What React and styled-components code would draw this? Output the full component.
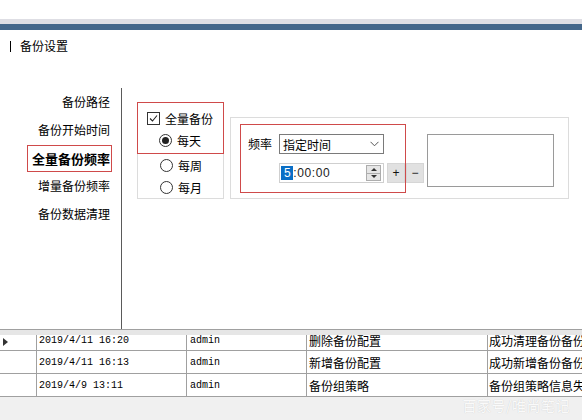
import React from 'react';
import styled, { createGlobalStyle } from 'styled-components';

const Global = createGlobalStyle`
  html, body { margin: 0; padding: 0; background: #fff; }
  body {
    width: 582px; height: 420px; overflow: hidden;
    font-family: "Noto Sans CJK SC", "Microsoft YaHei", sans-serif;
    color: #000;
  }
`;

const CJK = `"Noto Sans CJK SC", "Microsoft YaHei", sans-serif`;
const RED = '#cf4a4a';

const Page = styled.div`
  width: 582px; height: 420px; display: flex; flex-direction: column;
  overflow: hidden; background: #fff;
`;
const TopWhite = styled.div`height: 19px; flex-shrink: 0;`;
const GrayBand = styled.div`height: 5px; background: #dedee4; flex-shrink: 0;`;
const BlueBand = styled.div`height: 6px; background: #44678a; flex-shrink: 0;`;

const TitleBar = styled.div`
  height: 58px; box-sizing: border-box; padding: 8px 0 0 10px;
  display: flex; align-items: flex-start; flex-shrink: 0;
`;
const TitleText = styled.div`
  display: flex; align-items: center; height: 16px;
  font-size: 12px; font-family: ${CJK}; line-height: 16px;
`;
const TitleMark = styled.span`
  display: inline-block; width: 1px; height: 11px; background: #000; margin-right: 9px;
`;

const Main = styled.div`
  height: 241px; display: flex; flex-shrink: 0;
`;
const Sidebar = styled.div`
  width: 121px; box-sizing: border-box; padding-right: 11px;
  display: flex; flex-direction: column; align-items: flex-end;
`;
const MenuItem = styled.div`
  font-family: ${CJK};
  white-space: nowrap;
  ${p => p.$active ? `
    font-size: 13px; font-weight: 700;
    height: 27px; line-height: 25px; box-sizing: border-box;
    border: 1px solid ${RED}; margin: 1px -2px 0 0; padding: 0 1px 0 4px;
  ` : `
    font-size: 12px; height: 28px; line-height: 28px;
  `}
`;
const Divider = styled.div`width: 1px; background: #5a5a5a;`;

const Content = styled.div`
  flex: 1; padding: 14px 0 0 15px; box-sizing: border-box;
`;
const GroupRow = styled.div`
  display: flex; align-items: flex-end; gap: 6px;
`;
const Group1 = styled.div`
  width: 87px; height: 97px; box-sizing: border-box;
  border: 1px solid #dcdcdc; border-top: none;
  display: flex; flex-direction: column;
`;
const RedBox1 = styled.div`
  margin: 0 -1px; height: 52px; box-sizing: border-box;
  border: 1px solid ${RED}; padding-top: 4px;
`;
const OptRow = styled.div`
  height: 22px; display: flex; align-items: center;
  padding-left: ${p => p.$indent}px; gap: 5px;
  font-size: 12px; font-family: ${CJK};
`;
const CheckBox = styled.span`
  width: 11px; height: 11px; border: 1px solid #333; background: #fff;
  display: inline-flex; align-items: center; justify-content: center;
`;
const Radio = styled.span`
  width: 11px; height: 11px; border: 1px solid #333; border-radius: 50%;
  display: inline-flex; align-items: center; justify-content: center; background: #fff;
  &::after {
    content: ''; width: 7px; height: 7px; border-radius: 50%;
    background: ${p => p.$checked ? '#222' : 'transparent'};
  }
`;

const Group2 = styled.div`
  width: 339px; height: 82px; box-sizing: border-box;
  border: 1px solid #dcdcdc; display: flex; align-items: flex-start;
`;
const RedBox2 = styled.div`
  margin: 6px 0 0 9px; width: 166px; height: 69px; box-sizing: border-box;
  border: 1px solid ${RED}; padding: 9px 0 0 7px;
  display: grid; grid-template-columns: 31px auto; grid-auto-rows: 20px;
  row-gap: 9px; align-items: center; align-content: start;
`;
const Label = styled.span`font-size: 12px; font-family: ${CJK}; line-height: 20px;`;
const Select = styled.div`
  width: 105px; height: 20px; box-sizing: border-box; border: 1px solid #7a7a7a;
  background: #fff; display: flex; align-items: center; justify-content: space-between;
  padding: 0 4px 0 3px; font-size: 12px; font-family: ${CJK};
`;
const TimeRow = styled.div`display: flex; gap: 3px; align-items: center;`;
const TimeInput = styled.div`
  width: 105px; height: 20px; box-sizing: border-box; border: 1px solid #cfcfcf;
  display: flex; align-items: center; justify-content: space-between; padding: 0 2px 0 1px;
  font-family: "Liberation Sans", Arial, sans-serif; font-size: 12px; color: #222;
`;
const TimeText = styled.span`letter-spacing: 0.6px;`;
const Sel = styled.span`background: #0a6fc6; color: #fff; padding: 0 2px 0 3px; line-height: 13px;`;
const Spin = styled.div`
  width: 15px; height: 16px; display: flex; flex-direction: column;
  border: 1px solid #adadad; box-sizing: border-box; background: #e6e6e6;
`;
const SpinHalf = styled.div`
  flex: 1; display: flex; align-items: center; justify-content: center;
  ${p => p.$top ? 'border-bottom: 1px solid #adadad;' : ''}
`;
const Tri = styled.span`
  width: 0; height: 0; border-left: 3px solid transparent; border-right: 3px solid transparent;
  ${p => p.$up ? 'border-bottom: 3px solid #333;' : 'border-top: 3px solid #333;'}
`;
const SmallBtn = styled.div`
  width: 18px; height: 20px; box-sizing: border-box; background: #e1e1e1;
  border: 1px solid #d6d6d6; display: flex; align-items: center; justify-content: center;
  font-family: "Liberation Sans", Arial, sans-serif; font-size: 12px; color: #111;
  ${p => p.$offset ? `margin-top: ${p.$offset}px;` : ''}
`;
const TextBox = styled.div`
  margin: 16px 0 0 3px; width: 127px; height: 53px; box-sizing: border-box;
  border: 1px solid #9a9a9a; background: #fff;
`;

const Table = styled.div`
  border-top: 1px solid #a0a0a0; flex-shrink: 0;
`;
const Band = styled.div`height: 5px; background: #e6e6e6;`;
const Row = styled.div`
  display: grid; grid-template-columns: 37px 150px 120px 181px 1fr;
  box-sizing: border-box;
  height: ${p => p.$clip ? 16 : 23}px; border-bottom: 1px solid #a0a0a0; background: #fff;
`;
const Cell = styled.div`
  box-sizing: border-box; border-right: 1px solid #a0a0a0; overflow: hidden; white-space: nowrap;
  padding-left: ${p => p.$pad ?? 2}px;
  display: flex; align-items: ${p => p.$clip ? 'flex-start' : 'center'};
  font-family: ${p => p.$mono ? '"Liberation Mono", "Courier New", monospace' : CJK};
  font-size: ${p => p.$mono ? 10 : 12}px;
  line-height: ${p => p.$clip ? '9px' : 'normal'};
  ${p => p.$clip ? 'padding-top: 1px;' : ''}
  &:last-child { border-right: none; }
`;
const RowMark = styled.span`
  margin: 2px 0 0 1px;
  width: 0; height: 0; border-top: 4px solid transparent; border-bottom: 4px solid transparent;
  border-left: 5px solid #333;
`;
const Bottom = styled.div`
  flex: 1; background: #f0f0f0; display: flex; justify-content: flex-end; align-items: flex-start;
  padding: 0 12px 0 0;
`;
const Watermark = styled.span`
  font-family: ${CJK}; font-size: 14px; color: rgba(255,255,255,0.92);
  text-shadow: 0 0 1px rgba(0,0,0,0.18); letter-spacing: 0.5px; line-height: 16px;
`;

const rows = [
  { t: '2019/4/11 16:20', u: 'admin', a: '删除备份配置', r: '成功清理备份备份', clip: true },
  { t: '2019/4/11 16:13', u: 'admin', a: '新增备份配置', r: '成功新增备份备份' },
  { t: '2019/4/9 13:11', u: 'admin', a: '备份组策略', r: '备份组策略信息失败' },
];

export default function App() {
  return (
    <Page>
      <Global />
      <TopWhite />
      <GrayBand />
      <BlueBand />
      <TitleBar>
        <TitleText><TitleMark />备份设置</TitleText>
      </TitleBar>
      <Main>
        <Sidebar>
          <MenuItem>备份路径</MenuItem>
          <MenuItem>备份开始时间</MenuItem>
          <MenuItem $active>全量备份频率</MenuItem>
          <MenuItem>增量备份频率</MenuItem>
          <MenuItem>备份数据清理</MenuItem>
        </Sidebar>
        <Divider />
        <Content>
          <GroupRow>
            <Group1>
              <RedBox1>
                <OptRow $indent={9}>
                  <CheckBox>
                    <svg width="9" height="9" viewBox="0 0 9 9">
                      <polyline points="1,4.5 3.5,7 8,1.5" fill="none" stroke="#222" strokeWidth="1.1" />
                    </svg>
                  </CheckBox>
                  全量备份
                </OptRow>
                <OptRow $indent={21}><Radio $checked />每天</OptRow>
              </RedBox1>
              <OptRow $indent={22}><Radio />每周</OptRow>
              <OptRow $indent={22}><Radio />每月</OptRow>
            </Group1>
            <Group2>
              <RedBox2>
                <Label>频率</Label>
                <Select>
                  <span>指定时间</span>
                  <svg width="9" height="6" viewBox="0 0 9 6">
                    <polyline points="0.5,0.8 4.5,4.8 8.5,0.8" fill="none" stroke="#555" strokeWidth="1" />
                  </svg>
                </Select>
                <span />
                <TimeRow>
                  <TimeInput>
                    <TimeText><Sel>5</Sel>:00:00</TimeText>
                    <Spin>
                      <SpinHalf $top><Tri $up /></SpinHalf>
                      <SpinHalf><Tri /></SpinHalf>
                    </Spin>
                  </TimeInput>
                  <SmallBtn>+</SmallBtn>
                </TimeRow>
              </RedBox2>
              <SmallBtn $offset={45}>−</SmallBtn>
              <TextBox />
            </Group2>
          </GroupRow>
        </Content>
      </Main>
      <Table>
        <Band />
        {rows.map((r, i) => (
          <Row key={i} $clip={r.clip}>
            <Cell $pad={2} $clip={r.clip}>{r.clip && <RowMark />}</Cell>
            <Cell $mono $clip={r.clip}>{r.t}</Cell>
            <Cell $mono $pad={3} $clip={r.clip}>{r.u}</Cell>
            <Cell $pad={2} $clip={r.clip}>{r.a}</Cell>
            <Cell $pad={1} $clip={r.clip}>{r.r}</Cell>
          </Row>
        ))}
      </Table>
      <Bottom>
        <Watermark>百家号/唯尚笔记</Watermark>
      </Bottom>
    </Page>
  );
}
